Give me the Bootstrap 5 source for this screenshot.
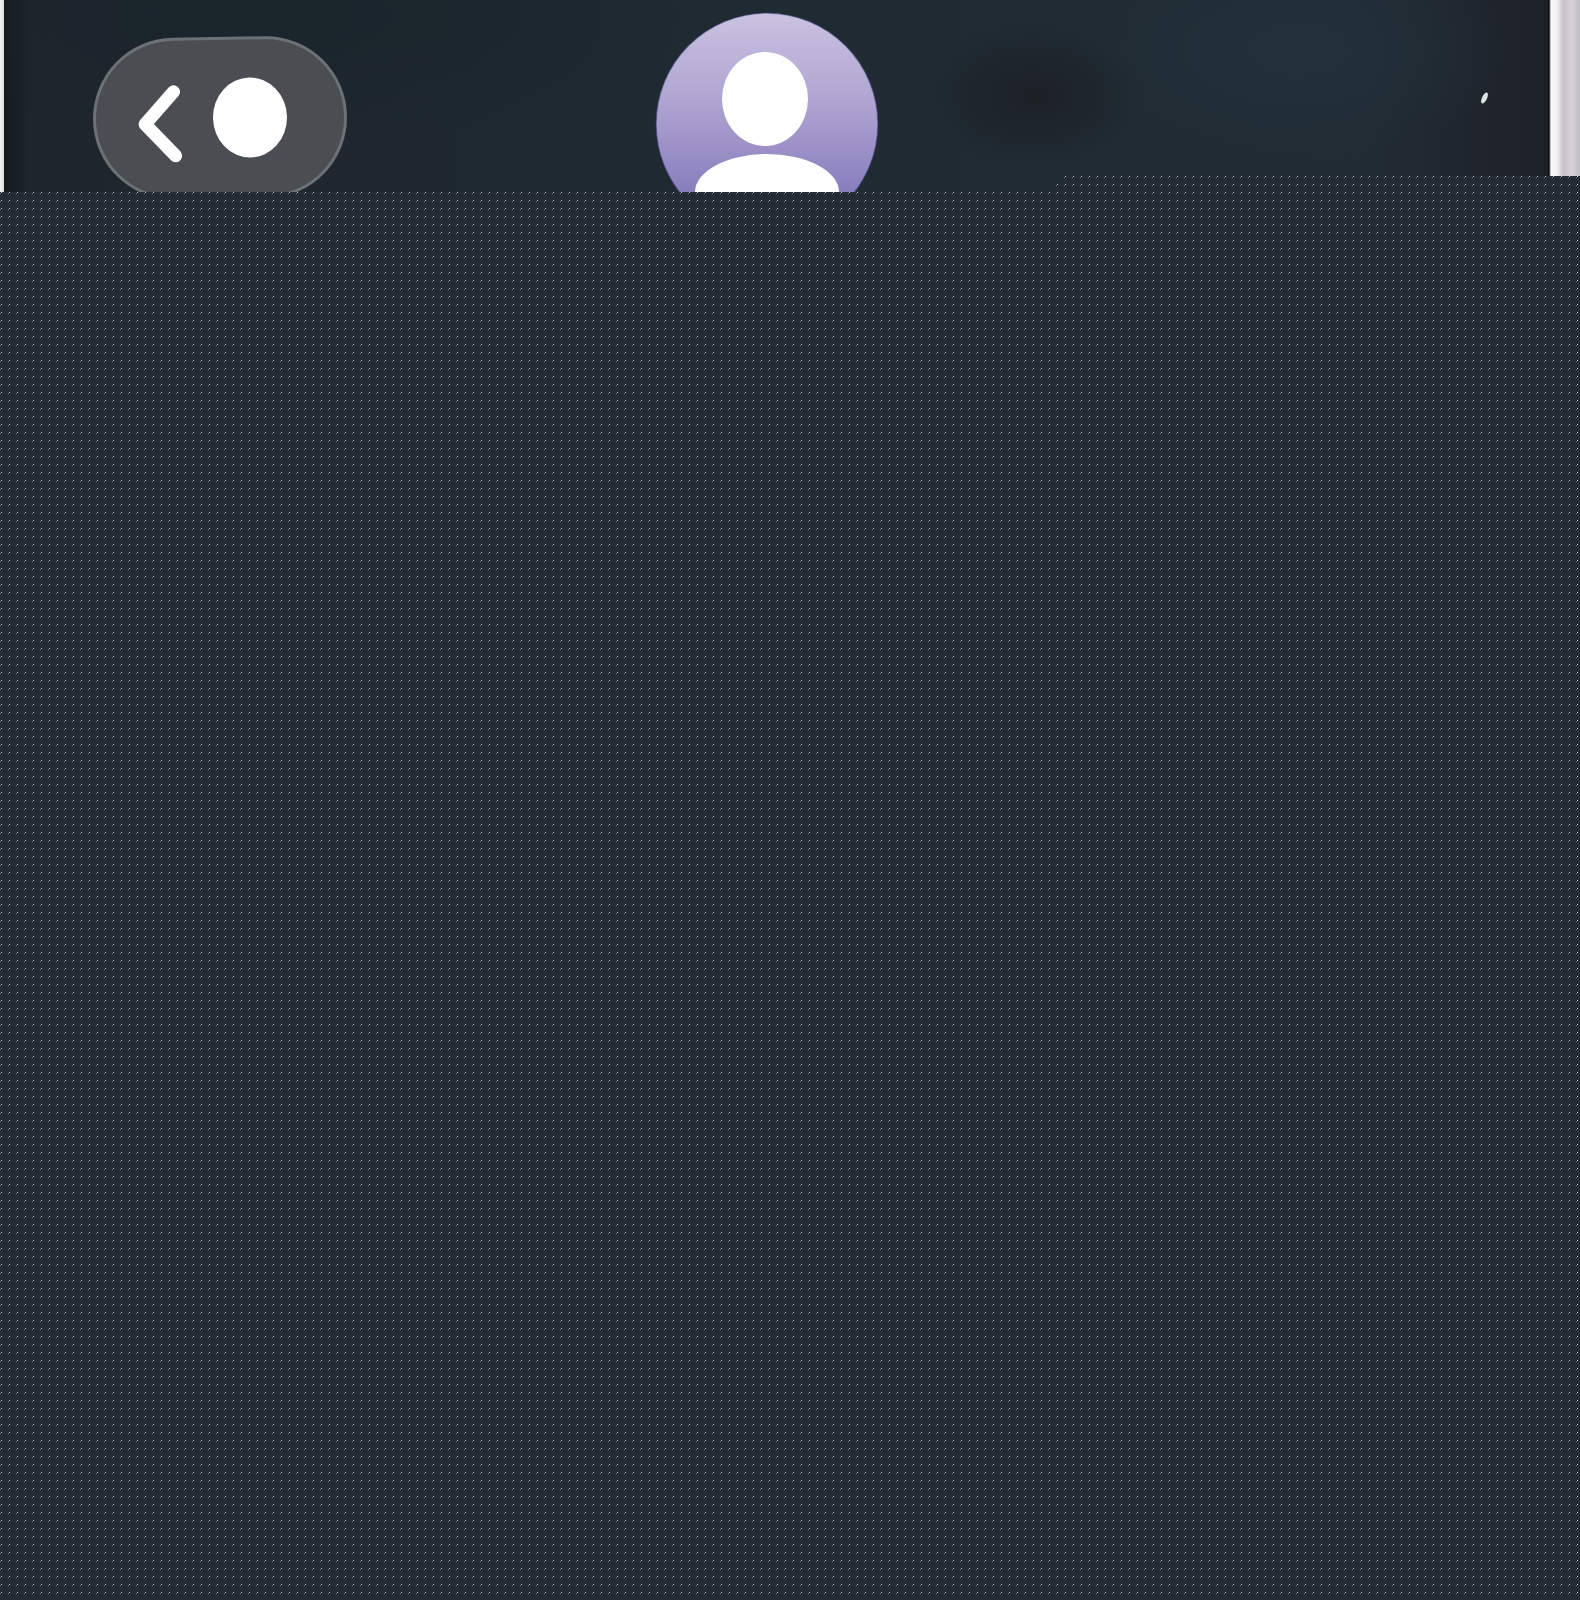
<!DOCTYPE html>
<html lang="en">

<head>
    <meta charset="UTF-8">
    <title>Profile</title>
    <link href="https://cdn.jsdelivr.net/npm/bootstrap@5.3.3/dist/css/bootstrap.min.css" rel="stylesheet">
    <style>
        body {
            min-height: 1600px;
            background-color: #262c35;
            background-image:
                radial-gradient(circle at 1.5px 0.5px, #c9cdd4 0.75px, transparent 0.8px),
                radial-gradient(circle at 0.5px 1.5px, #7c828e 0.75px, transparent 0.8px),
                radial-gradient(circle at 0.5px 0.5px, #0b0e14 0.75px, transparent 0.8px),
                radial-gradient(circle at 1.5px 1.5px, #0b0e14 0.75px, transparent 0.8px);
            background-size: 8px 8px;
        }

        .photo-strip {
            height: 192px;
            clip-path: polygon(0 0, 100% 0, 100% 176px, 1064px 176px, 1064px 184px, 1056px 184px, 1056px 192px, 0 192px);
        }

        .bezel-left {
            width: 4px;
            background: linear-gradient(90deg, #f4f4f4, #dcdcdc);
        }

        .bezel-right {
            width: 32px;
            background: linear-gradient(90deg, #0b0d10 0, #0b0d10 1px, #fafafa 3px, #f2f2f2 9px, #c6c4ca 15px, #d6d4d8 24px, #bdbbc2 32px);
        }

        .screen-area {
            background:
                radial-gradient(ellipse 110px 70px at 1030px 95px, #1b2025 0, transparent 100%),
                radial-gradient(ellipse 420px 130px at 260px 15px, #1a242b 0, transparent 100%),
                radial-gradient(ellipse 220px 110px at 1290px 50px, #22313a 0, transparent 100%),
                linear-gradient(90deg, #14181d 0, #1e252d 25px, #1f2a32 50%, #222c35 88%, #1d2028 100%);
        }

        .back-pill {
            width: 254px;
            height: 162px;
            margin-left: 89px;
            margin-top: 37px;
            padding-left: 42px;
            gap: 29px;
            background: #4a4d52;
            border: 3px solid #6d7074;
            transform: rotate(-1deg);
        }

        .back-pill svg {
            margin-top: 10px;
        }

        .home-dot {
            width: 74px;
            height: 80px;
            background: #fff;
            border-radius: 50%;
        }

        .avatar-pic {
            margin-left: 308px;
            margin-top: 12px;
        }

        .speck {
            width: 5px;
            height: 12px;
            margin-left: 603px;
            margin-top: 92px;
            background: #dfe3e6;
            border-radius: 50%;
            transform: rotate(25deg);
        }
    </style>
</head>

<body>
    <!-- top of the phone photo -->
    <div class="photo-strip d-flex">
        <div class="bezel-left flex-shrink-0"></div>
        <div class="screen-area flex-grow-1 d-flex align-items-start overflow-hidden">
            <div class="back-pill rounded-pill d-flex align-items-center flex-shrink-0">
                <svg width="46" height="78" viewBox="0 0 46 78">
                    <path d="M36 7 L7 39 L37 71" fill="none" stroke="#fff" stroke-width="13" stroke-linecap="round" stroke-linejoin="round" />
                </svg>
                <div class="home-dot flex-shrink-0"></div>
            </div>
            <svg class="avatar-pic flex-shrink-0" width="224" height="224" viewBox="0 0 224 224">
                <defs>
                    <linearGradient id="avatarFill" x1="0" y1="0" x2="0" y2="1">
                        <stop offset="0" stop-color="#c9c2df" />
                        <stop offset="0.35" stop-color="#b2a9d4" />
                        <stop offset="0.8" stop-color="#8a7fbd" />
                    </linearGradient>
                </defs>
                <circle cx="112" cy="112" r="111" fill="url(#avatarFill)" stroke="#2d3160" stroke-opacity="0.5" stroke-width="1.5" />
                <ellipse cx="110" cy="87" rx="43" ry="47" fill="#fff" />
                <ellipse cx="112" cy="180" rx="72" ry="38" fill="#fff" />
            </svg>
            <div class="speck flex-shrink-0"></div>
        </div>
        <div class="bezel-right flex-shrink-0"></div>
    </div>

    <script src="https://cdn.jsdelivr.net/npm/bootstrap@5.3.3/dist/js/bootstrap.bundle.min.js"></script>
</body>

</html>
